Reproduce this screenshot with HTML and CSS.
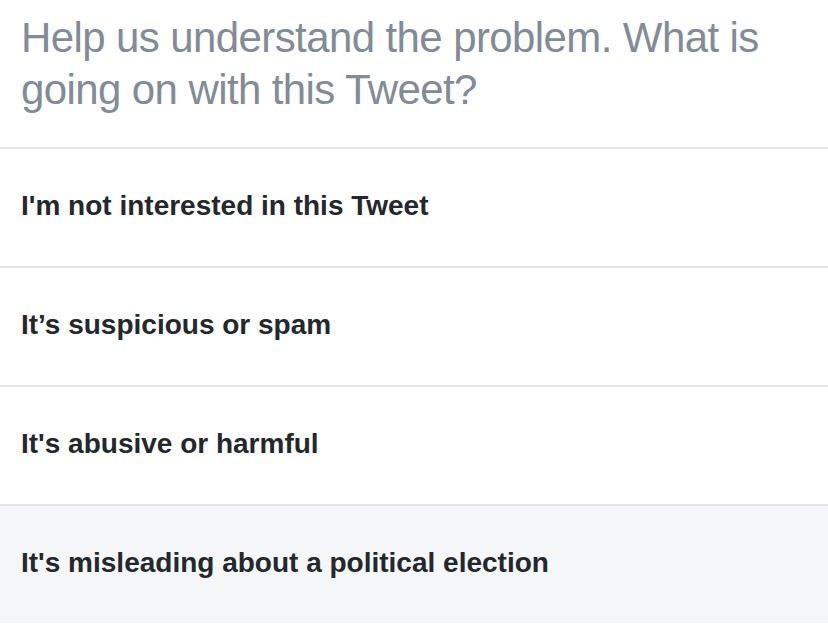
FILE: index.html
```html
<!DOCTYPE html>
<html>
<head>
<meta charset="utf-8">
<link rel="stylesheet" href="styles.css">
</head>
<body>
<div class="sheet">
  <div class="prompt">Help us understand the problem. What is going on with this Tweet?</div>
  <ul class="options">
    <li class="option">I'm not interested in this Tweet</li>
    <li class="option">It’s suspicious or spam</li>
    <li class="option">It's abusive or harmful</li>
    <li class="option option-active">It's misleading about a political election</li>
  </ul>
</div>
</body>
</html>
```
FILE: styles.css
```css
html, body {
  margin: 0;
  padding: 0;
  background: #ffffff;
}
.sheet {
  width: 828px;
  height: 624px;
  overflow: hidden;
  font-family: "Liberation Sans", Arial, sans-serif;
}
.prompt {
  height: 147px;
  box-sizing: border-box;
  padding: 12px 40px 0 21px;
  font-size: 42px;
  letter-spacing: -0.6px;
  line-height: 52px;
  color: #828b96;
  font-weight: 400;
}
.options {
  list-style: none;
  margin: 0;
  padding: 0;
}
.option {
  height: 119px;
  box-sizing: border-box;
  border-top: 2px solid #e3e6e9;
  display: flex;
  align-items: center;
  padding: 0 21px 3px;
  font-size: 28px;
  font-weight: 700;
  color: #24282d;
}
.option-active {
  background: #f5f6f8;
}
```
